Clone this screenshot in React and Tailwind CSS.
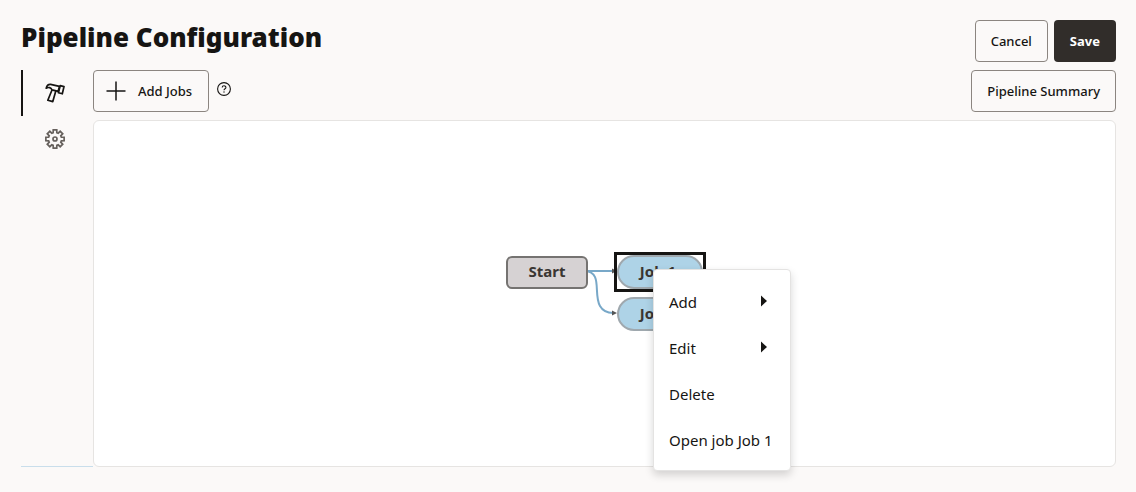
import { useState } from "react";

const menuItems = [
  { label: "Add", submenu: true },
  { label: "Edit", submenu: true },
  { label: "Delete" },
  { label: "Open job Job 1" },
];

// Outline of an eight tooth cog, centred on 10,10
const gearPoints = Array.from({ length: 8 }, (_, i) =>
  [
    [-16, 6.6],
    [-11, 9.3],
    [11, 9.3],
    [16, 6.6],
  ].map(([angle, radius]) => {
    const rad = ((i * 45 + angle) * Math.PI) / 180;
    return `${(10 + radius * Math.sin(rad)).toFixed(2)},${(10 - radius * Math.cos(rad)).toFixed(2)}`;
  })
)
  .flat()
  .join(" ");

function HammerIcon() {
  return (
    <svg width="20" height="20" viewBox="0 0 20 20" fill="none" stroke="currentColor" strokeWidth="1.7" strokeLinejoin="round">
      <path d="M1.2 5.2C1.8 2.8 3.4 1.2 5.6 1.4L14.4 3.4L13.2 8.3L7 6.8C6 4.6 3.6 3.8 1.2 5.2Z" />
      <path d="M15.2 2.7L19 3.6L17.3 10.8L13.4 9.7Z" />
      <path d="M7 7L2.8 17.2L7.8 18.6L10.8 8" />
    </svg>
  );
}

function GearIcon() {
  return (
    <svg width="20" height="20" viewBox="0 0 20 20" fill="none" stroke="currentColor" strokeWidth="1.7">
      <polygon points={gearPoints} />
      <circle cx="10" cy="10" r="2" />
    </svg>
  );
}

function PlusIcon() {
  return (
    <svg width="20" height="20" viewBox="0 0 20 20" fill="none" stroke="currentColor" strokeWidth="1.5">
      <path d="M10 0.5V19.5M0.5 10H19.5" />
    </svg>
  );
}

function HelpIcon() {
  return (
    <svg width="14" height="14" viewBox="0 0 14 14" fill="none" stroke="currentColor">
      <circle cx="7" cy="7" r="6.4" strokeWidth="1.1" />
      <path d="M5.2 5.6C5.2 3.2 8.9 3.3 8.9 5.4C8.9 6.8 7 6.7 7 8.3" strokeWidth="1.1" />
      <circle cx="7" cy="10" r="0.7" fill="currentColor" stroke="none" />
    </svg>
  );
}

function Button({ primary, children }) {
  return (
    <button
      type="button"
      className={
        primary
          ? "flex h-[42px] items-center rounded bg-[#312d2a] px-4 pt-0.5 text-[13px] font-bold text-white"
          : "flex h-[42px] items-center rounded border border-[#8b8580] px-[15px] pt-0.5 text-[13px] font-medium"
      }
    >
      {children}
    </button>
  );
}

function ContextMenu() {
  return (
    <ul
      role="menu"
      className="absolute left-[147px] top-[13px] min-w-[138px] rounded border border-[#e4e3e2] bg-white py-2 shadow-[0_4px_8px_rgba(0,0,0,0.16)]"
    >
      {menuItems.map((item) => (
        <li key={item.label} role="none">
          <button
            type="button"
            role="menuitem"
            className="flex h-[46px] w-full items-center justify-between whitespace-nowrap px-[15px] pt-0.5 text-left text-[15px]"
          >
            {item.label}
            {item.submenu && (
              <svg className="mb-0.5" width="20" height="12" viewBox="0 0 20 12" fill="currentColor">
                <path d="M6 0.5L12 6L6 11.5Z" />
              </svg>
            )}
          </button>
        </li>
      ))}
    </ul>
  );
}

function Diagram() {
  return (
    <div className="relative h-[76px] w-[197px] text-[15px] leading-5 font-bold text-[#3a3632]">
      <svg className="absolute left-[78px] top-0" width="36" height="76" viewBox="0 0 36 76" fill="none">
        <path d="M1 15H29" stroke="#78a8c8" strokeWidth="2" />
        <path d="M1 15C19 16 9 38 16 50Q20 57 29 57" stroke="#78a8c8" strokeWidth="2" />
        <path d="M28 12.5L33 15L28 17.5ZM28 54.5L33 57L28 59.5Z" fill="#555" />
      </svg>
      <div className="absolute left-0 top-0 flex h-[33px] w-[82px] items-center justify-center rounded-md border-2 border-[#757371] bg-[#d6d2d3] pb-0.5">
        Start
      </div>
      <div className="absolute left-[108px] top-[-4px] h-10 w-[92px] border-3 border-[#161513]">
        <div className="flex h-[34px] w-[86px] items-center justify-center rounded-full border-2 border-[#9fa8ae] bg-[#aed3e7] pr-1 pb-0.5">
          Job 1
        </div>
      </div>
      <div className="absolute left-[111px] top-[41px] flex h-[34px] w-[86px] items-center justify-center rounded-full border-2 border-[#9fa8ae] bg-[#aed3e7] pr-1 pb-0.5">
        Job 2
      </div>
      <div className="leading-6 font-normal text-[#161513]">
        <ContextMenu />
      </div>
    </div>
  );
}

function App() {
  const [tab, setTab] = useState("build");
  const tabClass = "flex h-[46px] w-full items-center border-l-2 pl-[22px]";

  return (
    <div className="flex min-h-screen flex-col bg-[#fbf9f8] pt-5 pr-5 pb-[25px] pl-[21px] font-['Noto_Sans',sans-serif] text-[#161513]">
      <header className="flex items-start justify-between">
        <h1 className="text-[26px] leading-[34px] font-black">Pipeline Configuration</h1>
        <div className="flex gap-1.5">
          <Button>Cancel</Button>
          <Button primary>Save</Button>
        </div>
      </header>

      <div className="mt-2 flex flex-1">
        <nav className="w-[72px] shrink-0 border-b border-[#c9deeb]">
          <button
            type="button"
            aria-label="Jobs"
            onClick={() => setTab("build")}
            className={`${tabClass} ${tab === "build" ? "border-[#161513]" : "border-transparent text-[#66615d]"}`}
          >
            <HammerIcon />
          </button>
          <button
            type="button"
            aria-label="Settings"
            onClick={() => setTab("settings")}
            className={`${tabClass} ${tab === "settings" ? "border-[#161513]" : "border-transparent text-[#66615d]"}`}
          >
            <GearIcon />
          </button>
        </nav>

        <main className="flex min-w-0 flex-1 flex-col gap-2">
          <div className="flex items-center justify-between">
            <div className="flex items-center gap-2">
              <button
                type="button"
                className="flex h-[42px] items-center gap-3 rounded border border-[#8b8580] pr-4 pl-3 text-[13px] font-medium"
              >
                <PlusIcon />
                <span className="pt-0.5">Add Jobs</span>
              </button>
              <button type="button" aria-label="Help" className="pb-1">
                <HelpIcon />
              </button>
            </div>
            <Button>Pipeline Summary</Button>
          </div>
          <section className="flex flex-1 items-center justify-center rounded-md border border-[#e6e4e2] bg-white">
            <Diagram />
          </section>
        </main>
      </div>
    </div>
  );
}

export default App;
